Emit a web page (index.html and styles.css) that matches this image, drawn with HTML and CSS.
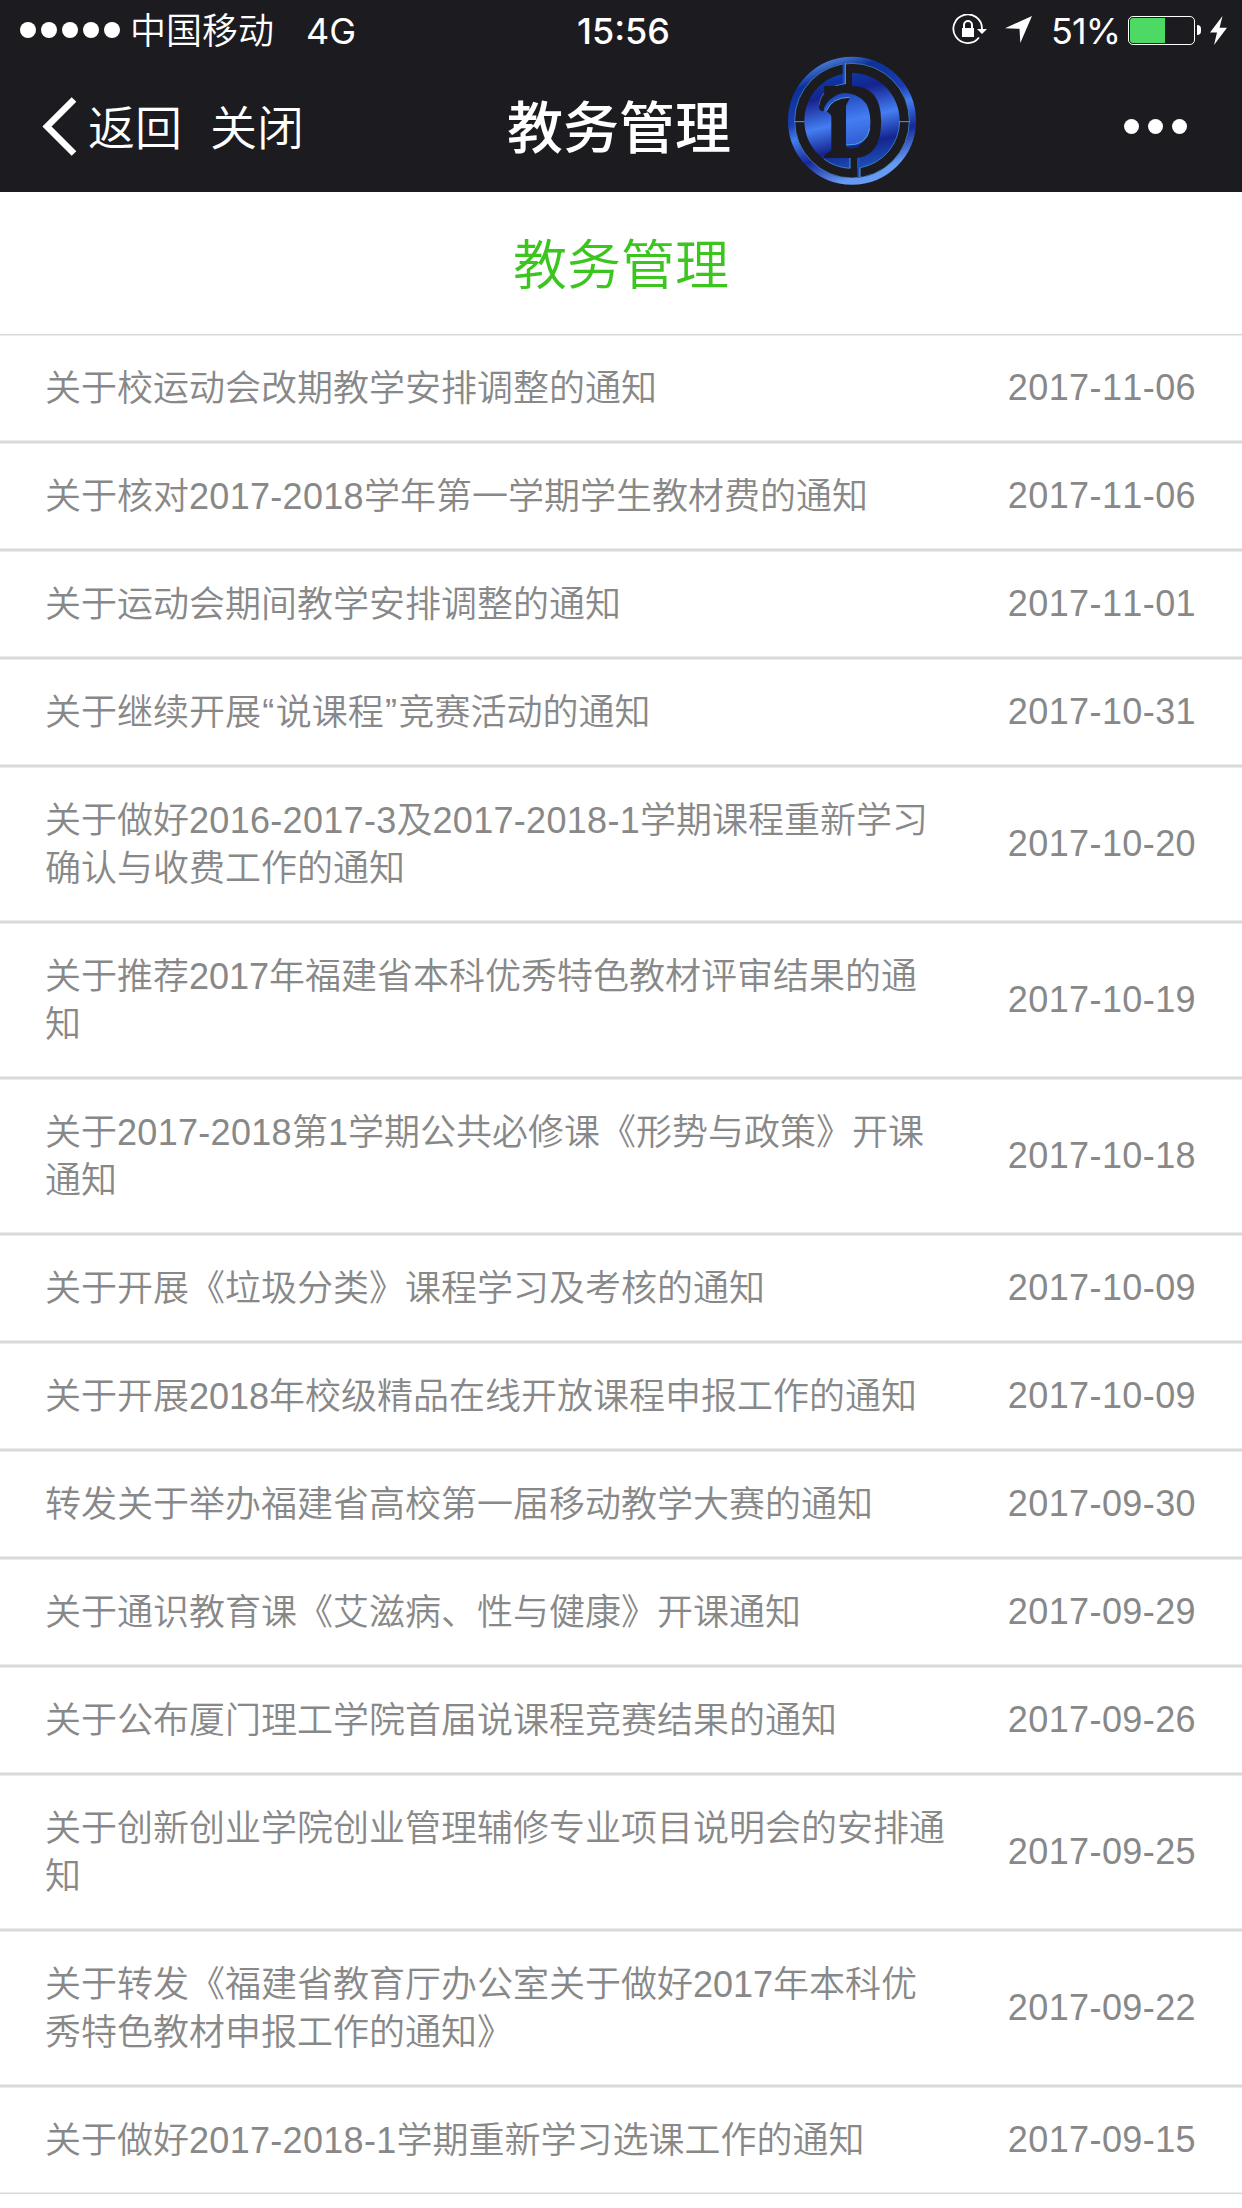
FILE: index.html
```html
<!DOCTYPE html>
<html lang="zh-CN">

<head>
    <meta charset="UTF-8">
    <meta name="viewport" content="width=device-width, initial-scale=1.0">
    <title>教务管理</title>
    <link rel="stylesheet" href="styles.css">
</head>

<body>
    <header>
        <div class="status-bar">
            <div class="status-left">
                <div class="signal"><i></i><i></i><i></i><i></i><i></i></div>
                <span class="carrier">中国移动</span>
                <span class="network">4G</span>
            </div>
            <div class="clock">15:56</div>
            <div class="status-right">
                <svg class="lock-icon" width="36" height="32" viewBox="0 0 36 32">
                    <path d="M27 23.5A14.3 14.3 0 1 1 30 15" fill="none" stroke="#fff" stroke-width="1.8"/>
                    <path d="M25 15h10l-5 5z" fill="#fff"/>
                    <rect x="10" y="14" width="12" height="9" fill="#fff"/>
                    <path d="M12 15v-4a4 4 0 0 1 8 0v4" fill="none" stroke="#fff" stroke-width="2"/>
                </svg>
                <svg class="location-icon" width="27" height="28" viewBox="0 0 27 28">
                    <path d="M27 0L15.3 27L14.5 12.8L0 12.2z" fill="#fff"/>
                </svg>
                <span class="percent">51%</span>
                <div class="battery"><div class="level"></div></div>
                <div class="battery-cap"></div>
                <svg class="bolt-icon" width="17" height="29" viewBox="0 0 17 29">
                    <path d="M12.5 0L0 16.5h7L4 29L17 11.8H9.6z" fill="#fff"/>
                </svg>
            </div>
        </div>
        <nav class="nav-bar">
            <div class="nav-left">
                <svg class="back-icon" width="35" height="59" viewBox="0 0 35 59">
                    <path d="M32 2.5L5 29.5L32 56.5" fill="none" stroke="#fff" stroke-width="6.5"/>
                </svg>
                <a class="back">返回</a>
                <a class="close">关闭</a>
            </div>
            <h1>教务管理</h1>
            <div class="more"><i></i><i></i><i></i></div>
        </nav>
        <svg class="badge" viewBox="53 47 384 387">
            <defs>
                <linearGradient id="ring" x1="0.25" y1="0" x2="0.6" y2="1">
                    <stop offset="0" stop-color="#5585e0"/>
                    <stop offset="0.15" stop-color="#0b3199"/>
                    <stop offset="0.4" stop-color="#1b3db5"/>
                    <stop offset="0.52" stop-color="#447df0"/>
                    <stop offset="0.72" stop-color="#15289a"/>
                    <stop offset="0.95" stop-color="#669af3"/>
                </linearGradient>
                <linearGradient id="disc" gradientUnits="userSpaceOnUse" x1="205" y1="100" x2="275" y2="384">
                    <stop offset="0" stop-color="#0c3ba6"/>
                    <stop offset="0.2" stop-color="#16238f"/>
                    <stop offset="0.5" stop-color="#447ef2"/>
                    <stop offset="0.76" stop-color="#15258f"/>
                    <stop offset="1" stop-color="#1b52ba"/>
                </linearGradient>
                <linearGradient id="inner" gradientUnits="userSpaceOnUse" x1="220" y1="150" x2="260" y2="330">
                    <stop offset="0" stop-color="#1c3fb4"/>
                    <stop offset="0.5" stop-color="#447ef2"/>
                    <stop offset="1" stop-color="#2a55c8"/>
                </linearGradient>
            </defs>
            <circle cx="245" cy="241" r="182" fill="none" stroke="url(#ring)" stroke-width="20"/>
            <circle cx="245" cy="241" r="172" fill="none" stroke="#4a9de8" stroke-width="2"/>
            <circle cx="245" cy="241" r="143" fill="url(#disc)"/>
            <path d="M388 241A143 143 0 0 1 270 382" stroke="#4a9de8" stroke-width="2" fill="none"/>
            <path d="M239 384A143 143 0 0 1 162 357" stroke="#4a9de8" stroke-width="2" fill="none"/>
            <!-- spokes between the ring and the disc -->
            <path d="M221 68v63M265 352v60" stroke="#1e4cc0" stroke-width="8"/>
            <path d="M225 68v63M239 352v32M269 382v30M72 244h30M388 244h30" stroke="#4a9de8" stroke-width="3" fill="none"/>
            <path d="M227 92h18v50h-18zM241 345h19v62h-19z" fill="#1c1b20"/>
            <!-- flag on the left of the stem -->
            <path d="M245 130C165 130 135 180 148 210Q152 217 160 215C160 185 190 157 240 160V130z" fill="#1c1b20"/>
            <path d="M225 130Q152 140 146 195" stroke="#4a9de8" stroke-width="2" fill="none"/>
            <text class="badge-letter" x="162" y="346" textLength="178" lengthAdjust="spacingAndGlyphs">D</text>
            <!-- stem and bowl highlights -->
            <path d="M160 215C166 188 190 160 222 158Q262 158 288 190Q304 220 299 265Q290 312 245 315H227V195L238 176C210 168 178 185 169 213z" fill="url(#inner)"/>
            <path d="M169 213C178 188 205 168 238 174L227 195V330H183V225z" fill="#1c1b20"/>
            <path d="M169 211Q184 172 237 171M227 314Q290 316 298 265" stroke="#4a9de8" stroke-width="3" fill="none"/>
            <path d="M106 225Q120 300 162 345L183 330V228L160 213Q140 214 148 180Q110 190 106 225z" fill="url(#disc)"/>
        </svg>
    </header>
    <main>
        <h2>教务管理</h2>
        <ul class="notice-list">
            <li><span class="title">关于校运动会改期教学安排调整的通知</span><span class="date">2017-11-06</span></li>
            <li><span class="title">关于核对<b>2017-2018</b>学年第一学期学生教材费的通知</span><span class="date">2017-11-06</span></li>
            <li><span class="title">关于运动会期间教学安排调整的通知</span><span class="date">2017-11-01</span></li>
            <li><span class="title">关于继续开展<b class="quote">“</b>说课程<b class="quote">”</b>竞赛活动的通知</span><span class="date">2017-10-31</span></li>
            <li><span class="title">关于做好<b>2016-2017-3</b>及<b>2017-2018-1</b>学期课程重新学习确认与收费工作的通知</span><span class="date">2017-10-20</span></li>
            <li><span class="title">关于推荐2017年福建省本科优秀特色教材评审结果的通知</span><span class="date">2017-10-19</span></li>
            <li><span class="title">关于<b>2017-2018</b>第1学期公共必修课《形势与政策》开课通知</span><span class="date">2017-10-18</span></li>
            <li><span class="title">关于开展《垃圾分类》课程学习及考核的通知</span><span class="date">2017-10-09</span></li>
            <li><span class="title">关于开展2018年校级精品在线开放课程申报工作的通知</span><span class="date">2017-10-09</span></li>
            <li><span class="title">转发关于举办福建省高校第一届移动教学大赛的通知</span><span class="date">2017-09-30</span></li>
            <li><span class="title">关于通识教育课《艾滋病、性与健康》开课通知</span><span class="date">2017-09-29</span></li>
            <li><span class="title">关于公布厦门理工学院首届说课程竞赛结果的通知</span><span class="date">2017-09-26</span></li>
            <li><span class="title">关于创新创业学院创业管理辅修专业项目说明会的安排通知</span><span class="date">2017-09-25</span></li>
            <li><span class="title">关于转发《福建省教育厅办公室关于做好2017年本科优秀特色教材申报工作的通知》</span><span class="date">2017-09-22</span></li>
            <li><span class="title">关于做好<b>2017-2018-1</b>学期重新学习选课工作的通知</span><span class="date">2017-09-15</span></li>
        </ul>
    </main>
</body>

</html>
```
FILE: styles.css
```css
* {
    margin: 0;
    padding: 0;
    box-sizing: border-box;
}

body {
    font-family: "Liberation Sans", "Noto Sans CJK SC", sans-serif;
    font-weight: 350;
    font-kerning: none;
    background-color: #fff;
    min-height: 2208px;
}

/* Header */
header {
    position: relative;
    height: 192px;
    background-color: #1c1b20;
    color: #fff;
}

.status-bar {
    display: grid;
    grid-template-columns: 1fr auto 1fr;
    align-items: center;
    height: 60px;
    padding: 0 15px 0 20px;
    font-family: Inter, "Noto Sans CJK SC", sans-serif;
    font-size: 36px;
    line-height: 58px;
}

.status-left,
.status-right {
    display: flex;
    align-items: center;
}

.status-right {
    justify-content: flex-end;
}

.signal {
    display: flex;
    gap: 5px;
}

.signal i {
    width: 16px;
    height: 16px;
    border-radius: 50%;
    background-color: #fff;
}

.carrier {
    margin-left: 10px;
    padding-top: 2px;
}

.network {
    margin-left: 32px;
}

.network,
.percent {
    font-weight: 400;
    padding-top: 2px;
}

.clock {
    font-weight: 500;
    padding-top: 2px;
}

.location-icon {
    margin-left: 17px;
}

.percent {
    margin-left: 19px;
    letter-spacing: -1px;
}

.battery {
    width: 67px;
    height: 29px;
    margin-left: 8px;
    padding: 1px;
    border: 1px solid #fff;
    border-radius: 5px;
}

.level {
    width: 35px;
    height: 25px;
    border-radius: 3px 0 0 3px;
    background-color: #4cd964;
}

.battery-cap {
    width: 4px;
    height: 10px;
    margin-left: 2px;
    border-radius: 0 4px 4px 0;
    background-color: #fff;
}

.bolt-icon {
    margin-left: 9px;
}

.nav-bar {
    display: grid;
    grid-template-columns: 1fr auto 1fr;
    align-items: center;
    height: 132px;
    padding: 0 55px 0 42px;
}

.nav-left {
    display: flex;
    align-items: center;
    font-size: 47px;
    line-height: 126px;
}

.nav-left a {
    padding-top: 6px;
}

.back {
    margin-left: 11px;
}

.close {
    margin-left: 28px;
}

h1 {
    font-size: 56px;
    font-weight: 500;
    line-height: 126px;
    padding-top: 6px;
    margin-right: -9px;
}

.more {
    display: flex;
    justify-content: flex-end;
    gap: 9px;
}

.more i {
    width: 15px;
    height: 15px;
    border-radius: 50%;
    background-color: #fff;
}

/* Floating badge over the nav bar */
.badge {
    position: absolute;
    left: 788px;
    top: 56px;
    width: 128px;
    height: 129px;
}

.badge-letter {
    font-family: "Liberation Serif", serif;
    font-size: 312px;
    font-weight: 700;
    fill: #1c1b20;
    stroke: #1c1b20;
    stroke-width: 12px;
}

/* Page title */
h2 {
    height: 142px;
    line-height: 149px;
    font-size: 54px;
    font-weight: 350;
    text-align: center;
    color: #3cc51f;
}

/* Notices */
.notice-list {
    list-style: none;
}

.notice-list li {
    display: flex;
    justify-content: space-between;
    align-items: center;
    padding: 31px 45px 29px;
    font-size: 36px;
    line-height: 48px;
    color: #888;
    box-shadow: inset 0 1px #d9d9d9, inset 0 -1px #d9d9d9, inset 0 2px #ececec, inset 0 -2px #ececec;
}

.title {
    width: 902px;
}

.title b {
    font-weight: inherit;
    letter-spacing: 0.3px;
}

.title .quote {
    margin: 0 1.2px;
}

.date {
    margin-right: 1px;
    padding-bottom: 2px;
    line-height: 46px;
    letter-spacing: 0.4px;
}
```
